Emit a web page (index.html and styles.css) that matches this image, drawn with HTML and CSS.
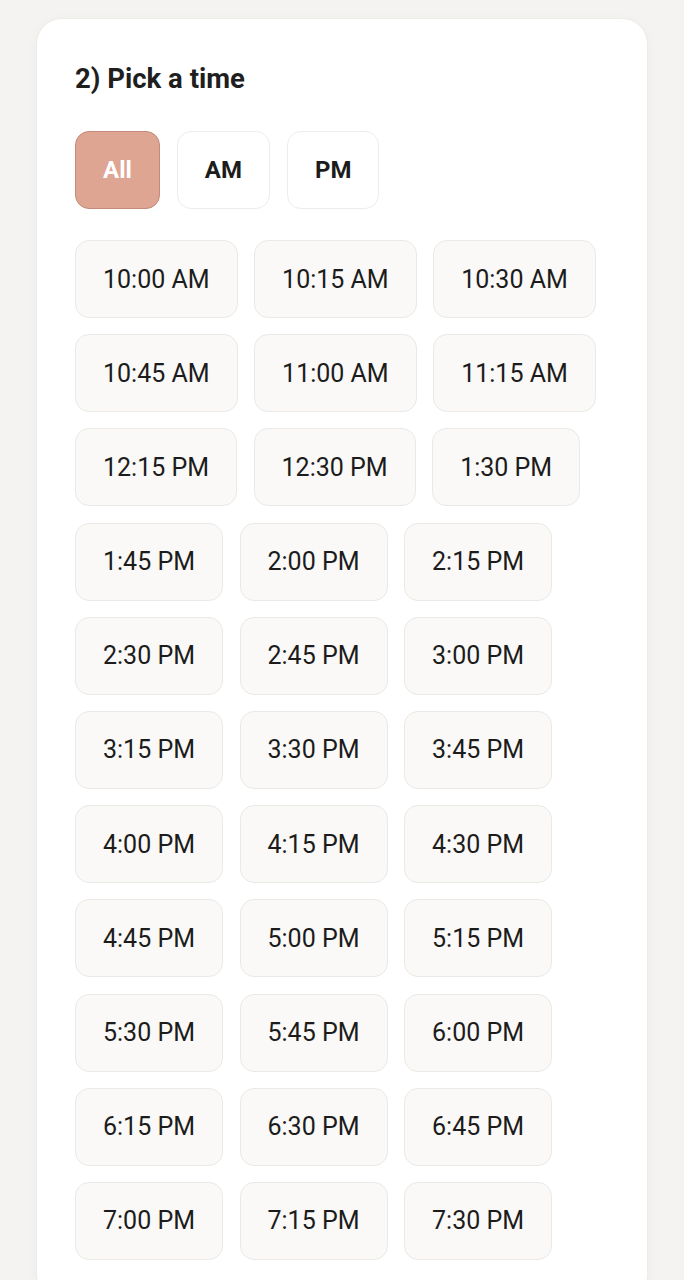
FILE: index.html
```html
<!DOCTYPE html>
<html lang="en">
<head>
    <meta charset="UTF-8">
    <meta name="viewport" content="width=device-width, initial-scale=1.0">
    <title>Pick a time</title>
    <link rel="stylesheet" href="styles.css">
</head>
<body>
    <div class="time-card">
        <h2>2) Pick a time</h2>
        <div class="filter-group">
            <button class="filter-btn active">All</button>
            <button class="filter-btn">AM</button>
            <button class="filter-btn">PM</button>
        </div>
        <div class="slot-list">
            <button class="slot">10:00 AM</button>
            <button class="slot">10:15 AM</button>
            <button class="slot">10:30 AM</button>
            <button class="slot">10:45 AM</button>
            <button class="slot">11:00 AM</button>
            <button class="slot">11:15 AM</button>
            <button class="slot">12:15 PM</button>
            <button class="slot">12:30 PM</button>
            <button class="slot">1:30 PM</button>
            <button class="slot">1:45 PM</button>
            <button class="slot">2:00 PM</button>
            <button class="slot">2:15 PM</button>
            <button class="slot">2:30 PM</button>
            <button class="slot">2:45 PM</button>
            <button class="slot">3:00 PM</button>
            <button class="slot">3:15 PM</button>
            <button class="slot">3:30 PM</button>
            <button class="slot">3:45 PM</button>
            <button class="slot">4:00 PM</button>
            <button class="slot">4:15 PM</button>
            <button class="slot">4:30 PM</button>
            <button class="slot">4:45 PM</button>
            <button class="slot">5:00 PM</button>
            <button class="slot">5:15 PM</button>
            <button class="slot">5:30 PM</button>
            <button class="slot">5:45 PM</button>
            <button class="slot">6:00 PM</button>
            <button class="slot">6:15 PM</button>
            <button class="slot">6:30 PM</button>
            <button class="slot">6:45 PM</button>
            <button class="slot">7:00 PM</button>
            <button class="slot">7:15 PM</button>
            <button class="slot">7:30 PM</button>
        </div>
    </div>
</body>
</html>
```

FILE: styles.css
```css
/* BODY */
body {
    margin: 0;
    padding: 18px 36px 0;
    font-family: Roboto, "Liberation Sans", sans-serif;
    background-color: #f4f3f1;
    color: #1c1c1c;
}

/* Card */
.time-card {
    background: #fff;
    border: 1px solid #eeece9;
    border-radius: 26px;
    padding: 43px 38px 40px;
    box-shadow: 0 2px 12px rgba(0, 0, 0, 0.03);
}

.time-card h2 {
    margin: 0 0 36px;
    font-size: 27.5px;
    font-weight: 700;
    line-height: 33px;
    color: #1f1f1f;
}

/* AM / PM filter */
.filter-group {
    display: flex;
    gap: 17px;
    margin-bottom: 31px;
}
.filter-btn {
    height: 78px;
    padding: 0 27px;
    font-family: inherit;
    font-size: 24px;
    font-weight: 700;
    color: #1c1c1c;
    background: #fff;
    border: 1px solid #efedea;
    border-radius: 14px;
}
.filter-btn.active {
    background-color: #dea592;
    border-color: #c58a7a;
    color: #fff;
}

/* Time slots */
.slot-list {
    display: flex;
    flex-wrap: wrap;
    gap: 16.2px 16.5px;
}
.slot {
    height: 78px;
    padding: 0 27px;
    font-family: inherit;
    font-size: 25px;
    font-weight: 400;
    color: #1c1c1c;
    background: #faf9f7;
    border: 1px solid #ebe9e6;
    border-radius: 14px;
}
```
